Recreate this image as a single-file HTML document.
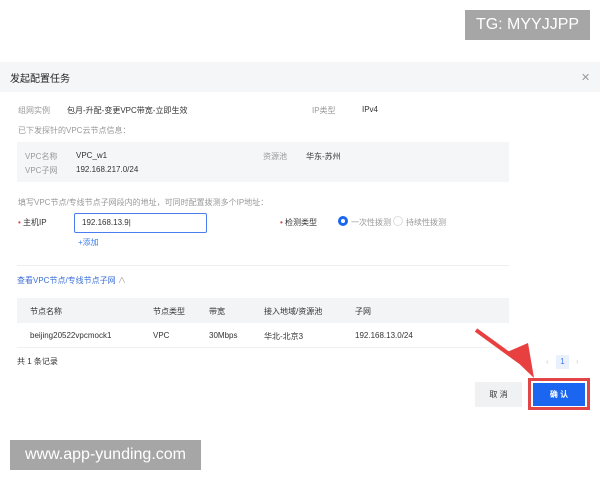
<!DOCTYPE html>
<html><head><meta charset="utf-8"><style>
*{margin:0;padding:0;box-sizing:border-box}
body{width:600px;height:480px;background:#fff;position:relative;overflow:hidden;font-family:"Liberation Sans","Noto Sans CJK SC",sans-serif;color:#333;font-size:8px}
.a{position:absolute;white-space:nowrap}
.g{color:#999}
</style></head><body>
<div class="a" style="left:465px;top:10px;width:125px;height:30px;background:#a6a6a6;color:#fff;font-size:16px;line-height:30px;text-align:center">TG: MYYJJPP</div>
<div class="a" style="left:0;top:62px;width:600px;height:30px;background:#f5f6f8"></div>
<div class="a" style="left:10px;top:70px;font-size:10px;color:#222">发起配置任务</div>
<div class="a" style="left:581px;top:71px;font-size:11px;color:#999">✕</div>
<div class="a g" style="left:18px;top:105px">组网实例</div>
<div class="a" style="left:67px;top:105px">包月-升配-变更VPC带宽-立即生效</div>
<div class="a g" style="left:312px;top:105px">IP类型</div>
<div class="a" style="left:362px;top:105px">IPv4</div>
<div class="a g" style="left:18px;top:125px">已下发探针的VPC云节点信息：</div>
<div class="a" style="left:17px;top:142px;width:492px;height:40px;background:#f5f6f8"></div>
<div class="a g" style="left:25px;top:151px">VPC名称</div>
<div class="a" style="left:76px;top:151px">VPC_w1</div>
<div class="a g" style="left:263px;top:151px">资源池</div>
<div class="a" style="left:306px;top:151px">华东-苏州</div>
<div class="a g" style="left:25px;top:165px">VPC子网</div>
<div class="a" style="left:76px;top:165px">192.168.217.0/24</div>
<div class="a g" style="left:18px;top:197px">填写VPC节点/专线节点子网段内的地址，可同时配置拨测多个IP地址：</div>
<div class="a" style="left:18px;top:217px"><span style="color:#e33">•</span> 主机IP</div>
<div class="a" style="left:74px;top:213px;width:133px;height:20px;border:1px solid #4a7df0;border-radius:2px;padding-left:7px;line-height:18px">192.168.13.9|</div>
<div class="a" style="left:78px;top:237px;color:#3b7cf0">+添加</div>
<div class="a" style="left:280px;top:217px"><span style="color:#e33">•</span> 检测类型</div>
<div class="a" style="left:338px;top:216px;width:10px;height:10px;border:3px solid #1a66f0;border-radius:50%"></div>
<div class="a g" style="left:351px;top:217px">一次性拨测</div>
<div class="a" style="left:393px;top:216px;width:10px;height:10px;border:1px solid #ddd;border-radius:50%"></div>
<div class="a g" style="left:406px;top:217px">持续性拨测</div>
<div class="a" style="left:17px;top:265px;width:492px;height:1px;background:#eee"></div>
<div class="a" style="left:17px;top:275px;color:#3b6fd8">查看VPC节点/专线节点子网 <span style="color:#999">∧</span></div>
<div class="a" style="left:17px;top:298px;width:492px;height:25px;background:#f3f4f6"></div>
<div class="a" style="left:30px;top:306px">节点名称</div>
<div class="a" style="left:153px;top:306px">节点类型</div>
<div class="a" style="left:209px;top:306px">带宽</div>
<div class="a" style="left:264px;top:306px">接入地域/资源池</div>
<div class="a" style="left:355px;top:306px">子网</div>
<div class="a" style="left:30px;top:331px">beijing20522vpcmock1</div>
<div class="a" style="left:153px;top:331px">VPC</div>
<div class="a" style="left:209px;top:331px">30Mbps</div>
<div class="a" style="left:264px;top:331px">华北-北京3</div>
<div class="a" style="left:355px;top:331px">192.168.13.0/24</div>
<div class="a" style="left:17px;top:347px;width:492px;height:1px;background:#f0f0f0"></div>
<div class="a" style="left:17px;top:356px">共 1 条记录</div>
<div class="a g" style="left:546px;top:357px;color:#ccc">‹</div>
<div class="a" style="left:556px;top:355px;width:13px;height:14px;background:#eaf1fd;color:#3b7cf0;text-align:center;line-height:14px">1</div>
<div class="a g" style="left:576px;top:357px;color:#ccc">›</div>
<div class="a" style="left:475px;top:382px;width:47px;height:25px;background:#f0f1f3;text-align:center;line-height:25px">取 消</div>
<div class="a" style="left:528px;top:378px;width:62px;height:32px;border:3px solid #e24545"></div>
<div class="a" style="left:533px;top:383px;width:52px;height:23px;background:#1a66f0;color:#fff;text-align:center;line-height:23px;font-weight:bold">确 认</div>
<svg class="a" style="left:0;top:0" width="600" height="480"><line x1="476" y1="330" x2="520" y2="362" stroke="#e84040" stroke-width="4"/><polygon points="507,352 534,378 528,343" fill="#e84040"/></svg>
<div class="a" style="left:10px;top:440px;width:191px;height:30px;background:#a6a6a6;color:#fff;font-size:16px;line-height:30px;text-align:center">www.app-yunding.com</div>
</body></html>
